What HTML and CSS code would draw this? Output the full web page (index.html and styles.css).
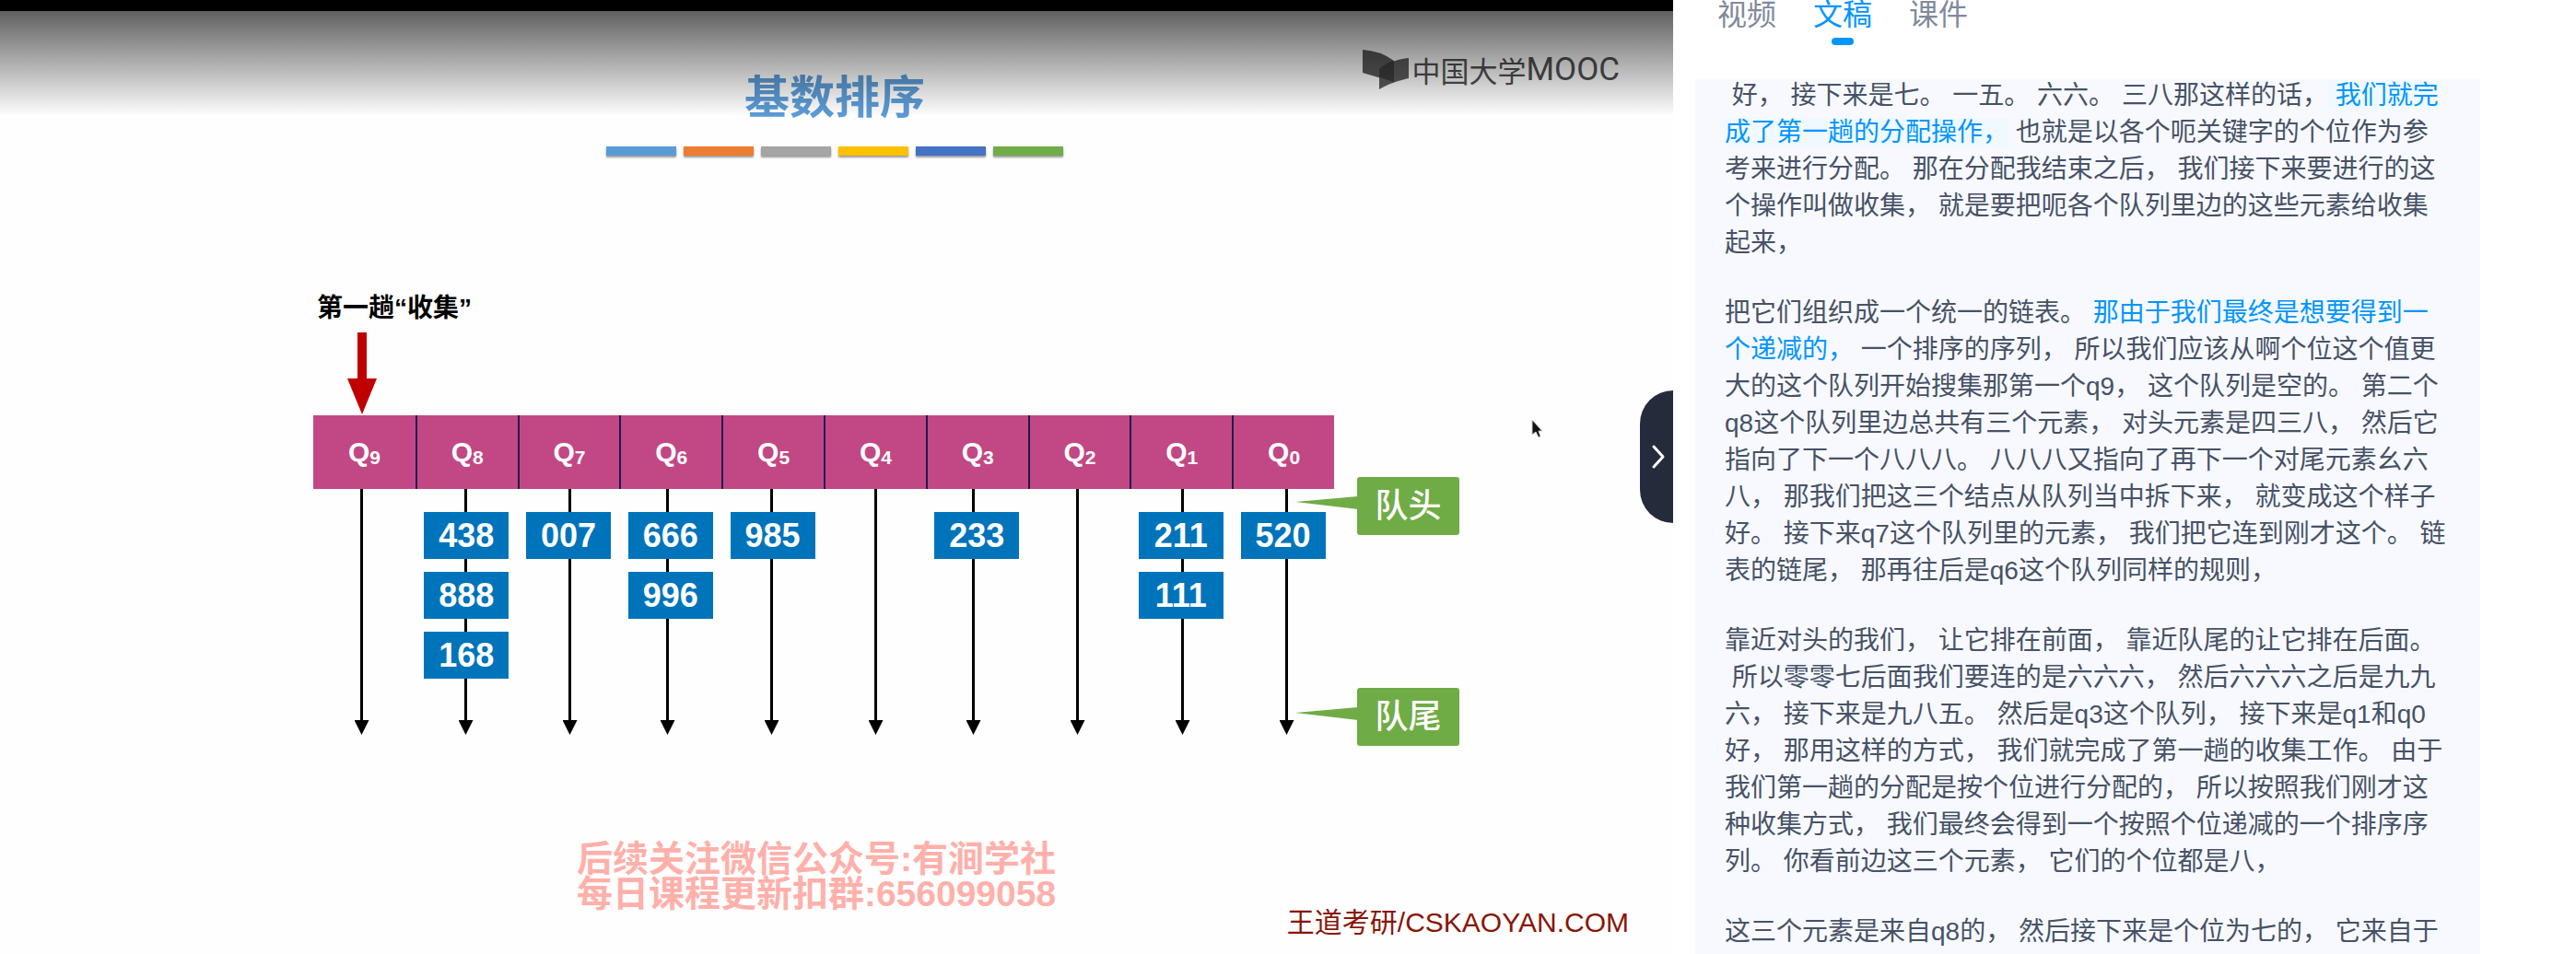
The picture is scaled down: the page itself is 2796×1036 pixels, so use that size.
FILE: index.html
```html
<!DOCTYPE html>
<html lang="zh-CN">
<head>
<meta charset="utf-8">
<meta name="viewport" content="width=device-width, initial-scale=1">
<title>基数排序</title>
<link rel="stylesheet" href="styles.css">
</head>
<body>
<div class="app">
  <main class="player">
    <div class="letterbox"></div>
    <section class="slide">
      <h1 class="title">基数排序</h1>
      <div class="stripes">
        <span class="stripe sky"></span><span class="stripe orange"></span><span class="stripe gray"></span><span class="stripe yellow"></span><span class="stripe blue"></span><span class="stripe green"></span>
      </div>
      <div class="diagram">
        <p class="step">第一趟“收集”</p>
        <svg class="pointer" width="32" height="90" viewBox="0 0 32 90" aria-hidden="true"><path d="M11 0h10v50h11L16 89 0 50h11z" fill="#c00000"/></svg>
        <div class="queues">
          <div class="head">
            <span class="cell">Q<sub>9</sub></span><span class="cell">Q<sub>8</sub></span><span class="cell">Q<sub>7</sub></span><span class="cell">Q<sub>6</sub></span><span class="cell">Q<sub>5</sub></span><span class="cell">Q<sub>4</sub></span><span class="cell">Q<sub>3</sub></span><span class="cell">Q<sub>2</sub></span><span class="cell">Q<sub>1</sub></span><span class="cell">Q<sub>0</sub></span>
          </div>
          <div class="lanes">
            <svg class="lines" viewBox="0 0 1107 268" aria-hidden="true">
              <defs><marker id="tip" viewBox="0 0 16 16" refX="0" refY="8" markerWidth="16" markerHeight="16" markerUnits="userSpaceOnUse" orient="auto"><path d="M0 0L16 8 0 16z"/></marker></defs>
              <path marker-end="url(#tip)" d="M52 0V251"/><path marker-end="url(#tip)" d="M165 0V251"/><path marker-end="url(#tip)" d="M278 0V251"/><path marker-end="url(#tip)" d="M384 0V251"/><path marker-end="url(#tip)" d="M497 0V251"/><path marker-end="url(#tip)" d="M610 0V251"/><path marker-end="url(#tip)" d="M716 0V251"/><path marker-end="url(#tip)" d="M829 0V251"/><path marker-end="url(#tip)" d="M943 0V251"/><path marker-end="url(#tip)" d="M1056 0V251"/>
            </svg>
            <div class="lane"></div>
            <div class="lane"><span class="item">438</span><span class="item">888</span><span class="item">168</span></div>
            <div class="lane"><span class="item">007</span></div>
            <div class="lane"><span class="item">666</span><span class="item">996</span></div>
            <div class="lane"><span class="item">985</span></div>
            <div class="lane"></div>
            <div class="lane"><span class="item">233</span></div>
            <div class="lane"></div>
            <div class="lane"><span class="item">211</span><span class="item">111</span></div>
            <div class="lane"><span class="item">520</span></div>
          </div>
          <div class="callout front"><svg width="68" height="14" viewBox="0 0 68 14" aria-hidden="true"><path d="M0 6L68 0V14z" fill="#6fac46"/></svg>队头</div>
          <div class="callout rear"><svg width="68" height="14" viewBox="0 0 68 14" aria-hidden="true"><path d="M0 6L68 0V14z" fill="#6fac46"/></svg>队尾</div>
        </div>
      </div>
      <p class="notice">后续关注微信公众号:有涧学社<br>每日课程更新扣群:656099058</p>
      <p class="credit">王道考研/CSKAOYAN.COM</p>
    </section>
    <div class="brand">
      <svg width="52" height="46" viewBox="0 0 52 46" aria-hidden="true"><path d="M1 1Q20 2 35 13V36L1 26z" fill="#5a5a5a"/><path d="M19 22Q34 11 51 10V32Q32 36 19 44z" fill="#5c5c5c"/><path d="M19 22Q27 15 35 13V36L19 31z" fill="#3c3c3c"/></svg>
      <span class="brand-text">中国大学</span><span class="brand-latin">MOOC</span>
    </div>
    <svg class="cursor" width="14" height="22" viewBox="0 0 14 22" aria-hidden="true"><path d="M1 1V17L5 14 8 20 10 19 8 13H12z" fill="#111" stroke="#ccc" stroke-width="1"/></svg>
    <button class="collapse" type="button" aria-label="收起侧栏"><svg width="16" height="28" viewBox="0 0 16 28" aria-hidden="true"><path d="M3 3L13 14 3 25" fill="none" stroke="#fff" stroke-width="3" stroke-linecap="round" stroke-linejoin="round"/></svg></button>
  </main>
  <aside class="side">
    <nav class="tabs"><a class="tab" href="#video">视频</a><a class="tab active" href="#script">文稿</a><a class="tab" href="#slides">课件</a></nav>
    <div class="transcript" id="script">
      <div class="transcript-body">
        <p>&nbsp;好， 接下来是七。 一五。 六六。 三八那这样的话，<mark class="current"> 我们就完成了第一趟的分配操作，</mark> 也就是以各个呃关键字的个位作为参考来进行分配。 那在分配我结束之后， 我们接下来要进行的这个操作叫做收集， 就是要把呃各个队列里边的这些元素给收集起来，</p>
        <p>把它们组织成一个统一的链表。 <mark>那由于我们最终是想要得到一个递减的，</mark> 一个排序的序列， 所以我们应该从啊个位这个值更大的这个队列开始搜集那第一个q9， 这个队列是空的。 第二个q8这个队列里边总共有三个元素， 对头元素是四三八， 然后它指向了下一个八八八。 八八八又指向了再下一个对尾元素幺六八， 那我们把这三个结点从队列当中拆下来， 就变成这个样子好。 接下来q7这个队列里的元素， 我们把它连到刚才这个。 链表的链尾， 那再往后是q6这个队列同样的规则，</p>
        <p>靠近对头的我们， 让它排在前面， 靠近队尾的让它排在后面。<wbr>&nbsp;所以零零七后面我们要连的是六六六， 然后六六六之后是九九六， 接下来是九八五。 然后是q3这个队列， 接下来是q1和q0好， 那用这样的方式， 我们就完成了第一趟的收集工作。 由于我们第一趟的分配是按个位进行分配的， 所以按照我们刚才这种收集方式， 我们最终会得到一个按照个位递减的一个排序序列。 你看前边这三个元素， 它们的个位都是八，</p>
        <p>这三个元素是来自q8的， 然后接下来是个位为七的， 它来自于</p>
      </div>
    </div>
  </aside>
</div>
</body>
</html>
```
FILE: styles.css
```css
* { box-sizing: border-box; }
body {
  margin: 0;
  font-family: "Liberation Sans", "Noto Sans CJK SC", sans-serif;
  background: #fff;
}
h1, p { margin: 0; }

.app { display: flex; height: 100vh; overflow: hidden; }

/* Video area */
.player {
  position: relative;
  flex: 1;
  display: flex;
  flex-direction: column;
  overflow: hidden;
}
.letterbox { height: 12px; background: #000; }
.slide {
  flex: 1;
  display: flex;
  flex-direction: column;
  align-items: center;
  background: #fefefe;
}
.player::after {
  content: "";
  position: absolute;
  inset: 12px 0 auto;
  height: 114px;
  background: linear-gradient(rgba(0, 0, 0, .62), rgba(0, 0, 0, 0));
  pointer-events: none;
}
.title {
  margin-right: 4px;
  padding-top: 58px;
  font-size: 49px;
  line-height: 72px;
  font-weight: 700;
  color: #5b9bd5;
}
.stripes { display: flex; gap: 8px; width: 496px; margin-right: 4px; padding-top: 17px; }
.stripe { flex: 1; height: 10px; box-shadow: 0 2px 2px rgba(0, 0, 0, .4); }
.sky { background: #5b9bd5; }
.orange { background: #ed7d31; }
.gray { background: #a5a5a5; }
.yellow { background: #ffc000; }
.blue { background: #4472c4; }
.green { background: #70ad47; }

/* Queue diagram */
.diagram { width: 1108px; margin-top: 146px; margin-right: 28px; }
.step { font-size: 28px; line-height: 40px; font-weight: 700; padding-left: 4px; }
.pointer { display: block; margin: 6px 0 0 37px; }
.queues { position: relative; }
.head, .lanes { display: grid; grid-template-columns: repeat(10, 1fr); }
.cell {
  height: 80px;
  background: #c24885;
  color: #fff;
  font-size: 30px;
  line-height: 80px;
  font-weight: 700;
  text-align: center;
}
.cell + .cell { border-left: 2px solid #1f1a4f; }
.cell sub { font-size: 21px; line-height: 1; vertical-align: -3px; }
.lanes { position: relative; height: 268px; }
.lines {
  position: absolute;
  inset: 0;
  width: 100%;
  height: 100%;
  stroke: #000;
  stroke-width: 3;
}
.lines marker { stroke: none; }
.lane {
  position: relative;
  display: flex;
  flex-direction: column;
  align-items: center;
  gap: 14px;
  padding-top: 25px;
}
.item {
  width: 92px;
  height: 51px;
  background: #0074bb;
  color: #fff;
  font-size: 36px;
  line-height: 52px;
  font-weight: 700;
  text-align: center;
}
.callout {
  position: absolute;
  left: 1133px;
  width: 111px;
  height: 63px;
  border-radius: 3px;
  background: #6fac46;
  color: #fff;
  font-size: 36px;
  line-height: 64px;
  font-weight: 500;
  text-align: center;
}
.callout svg { position: absolute; right: 110px; top: 21px; }
.front { top: 67px; }
.rear { top: 296px; }

.notice {
  margin: 115px 44px 0 0;
  font-size: 39px;
  line-height: 38px;
  font-weight: 700;
  color: #ffb0aa;
}
.credit {
  align-self: flex-end;
  margin-top: -8px;
  padding: 0 48px 0 0;
  font-size: 30px;
  line-height: 40px;
  color: #8a1508;
}

/* Overlays on the video */
.brand {
  position: absolute;
  top: 53px;
  right: 58px;
  display: flex;
  align-items: center;
  color: #505050;
}
.brand svg { margin-right: 3px; }
.brand-text { font: 400 31px/46px "Noto Sans CJK SC", sans-serif; }
.brand-latin { font: 400 35px/46px Roboto, sans-serif; }
.cursor { position: absolute; left: 1662px; top: 455px; }
.collapse {
  position: absolute;
  right: 0;
  top: 424px;
  width: 36px;
  height: 144px;
  padding: 0 8px 0 0;
  display: flex;
  align-items: center;
  justify-content: flex-end;
  border: 0;
  border-radius: 36px 0 0 36px;
  background: #252b3a;
}

/* Side panel */
.side {
  flex: 0 0 980px;
  display: flex;
  flex-direction: column;
  padding: 0 104px 0 24px;
  background: #fff;
}
.tabs {
  display: flex;
  align-items: flex-start;
  gap: 40px;
  height: 94px;
  margin-top: -8px;
  padding-left: 24px;
}
.tab {
  display: flex;
  flex-direction: column;
  align-items: center;
  gap: 1px;
  font-size: 32px;
  line-height: 48px;
  color: #7f8a9c;
  text-decoration: none;
}
.tab::after { content: ""; width: 24px; height: 8px; border-radius: 4px; }
.tab.active { color: #0095ff; }
.tab.active::after { background: #0095ff; }
.transcript { flex: 1; overflow: hidden; background: #f7f9fe; }
.transcript-body {
  display: flex;
  flex-direction: column;
  gap: 36px;
  margin-top: -2px;
  padding: 0 32px;
  font-size: 28px;
  line-height: 40px;
  color: #475266;
}
mark { background: none; color: #0095ff; }
.current { background: #f0f9ff; }
```
